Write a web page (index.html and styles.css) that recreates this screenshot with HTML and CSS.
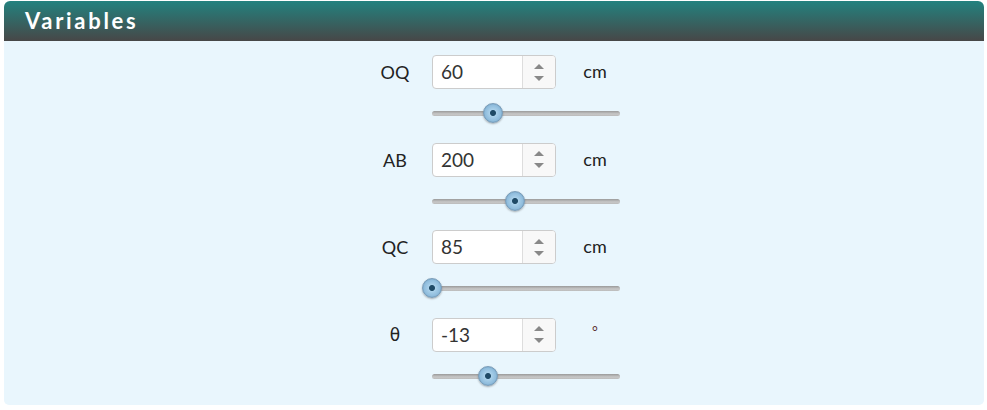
FILE: index.html
```html
<!DOCTYPE html>
<html lang="en">
<head>
  <meta charset="UTF-8">
  <title>Variables</title>
  <link rel="stylesheet" href="styles.css">
</head>
<body>
  <div class="panel">
    <div class="panel-head">Variables</div>
    <div class="panel-body">
      <div class="vars">
        <div class="label">OQ</div>
        <div class="num"><span class="val">60</span><span class="spin"><i class="up"></i><i class="down"></i></span></div>
        <div class="unit">cm</div>
        <div class="slider"><div class="thumb" style="left: 32.6%"></div></div>

        <div class="label">AB</div>
        <div class="num"><span class="val">200</span><span class="spin"><i class="up"></i><i class="down"></i></span></div>
        <div class="unit">cm</div>
        <div class="slider"><div class="thumb" style="left: 44%"></div></div>

        <div class="label">QC</div>
        <div class="num"><span class="val">85</span><span class="spin"><i class="up"></i><i class="down"></i></span></div>
        <div class="unit">cm</div>
        <div class="slider"><div class="thumb" style="left: 0%"></div></div>

        <div class="label greek">θ</div>
        <div class="num"><span class="val">-13</span><span class="spin"><i class="up"></i><i class="down"></i></span></div>
        <div class="unit deg">°</div>
        <div class="slider"><div class="thumb" style="left: 30%"></div></div>
      </div>
    </div>
  </div>
</body>
</html>
```

FILE: styles.css
```css
body {
  margin: 0;
  padding: 1px 3px 4px 4px;
  background: #fff;
  font-family: Lato, "Open Sans", sans-serif;
  color: #222;
}
.panel {
  width: 980px;
}
.panel-head {
  height: 40px;
  box-sizing: border-box;
  padding: 6px 0 0 21px;
  background: linear-gradient(#23827f, #474747);
  border-radius: 6px 6px 0 0;
  color: #fff;
  font-size: 22px;
  font-weight: bold;
  letter-spacing: 2.7px;
}
.panel-body {
  height: 364px;
  background: #e9f6fd;
  border-radius: 0 0 5px 5px;
  padding-top: 14px;
  box-sizing: border-box;
}
.vars {
  display: grid;
  grid-template-columns: 50px 124px 54px;
  column-gap: 12px;
  width: 252px;
  margin: 0 auto;
  position: relative;
  left: 2px;
}
.label {
  grid-column: 1;
  text-align: center;
  font-size: 18px;
  line-height: 34px;
}
.greek {
  font-family: "DejaVu Sans", sans-serif;
  font-size: 17px;
}
.num {
  grid-column: 2;
  height: 34px;
  display: flex;
  background: #fff;
  border: 1px solid #ccc;
  border-radius: 4px;
  box-sizing: border-box;
}
.val {
  flex: 1;
  padding-left: 8px;
  font-size: 19px;
  line-height: 32px;
  color: #333;
}
.spin {
  width: 32px;
  border-left: 1px solid #ddd;
  background: #f8f8f8;
  border-radius: 0 3px 3px 0;
  display: flex;
  flex-direction: column;
  align-items: center;
  justify-content: center;
  gap: 7px;
}
.up, .down {
  width: 0;
  height: 0;
  border-left: 5px solid transparent;
  border-right: 5px solid transparent;
}
.up {
  border-bottom: 5px solid #888;
}
.down {
  border-top: 5px solid #888;
}
.unit {
  grid-column: 3;
  text-align: center;
  font-size: 18px;
  line-height: 32px;
}
.deg {
  font-size: 14px;
  line-height: 26px;
  color: #5a3030;
}
.slider {
  grid-column: 2 / 4;
  width: 188px;
  height: 5px;
  margin: 22px 0 26.5px;
  position: relative;
  border-radius: 3px;
  background: linear-gradient(#9a9a9a, #c8c8c8 60%, #bbb);
}
.thumb {
  position: absolute;
  top: -8px;
  width: 20px;
  height: 20px;
  margin-left: -10px;
  box-sizing: border-box;
  border-radius: 50%;
  border: 1px solid #7a9cb8;
  background: radial-gradient(circle at 50% 50%, #1f4a66 0, #1f4a66 2.5px, #a9d0ea 3.5px, #8fbcdc 8px, #6e9fc2 10px);
  box-shadow: 0 1px 2px rgba(0, 0, 0, 0.3);
}
```
